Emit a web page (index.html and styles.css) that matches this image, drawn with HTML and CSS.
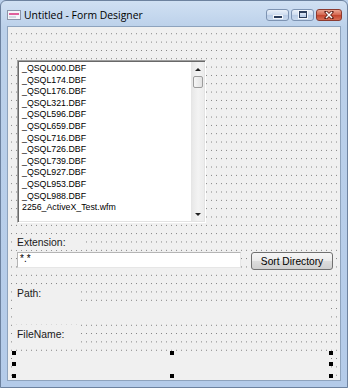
FILE: index.html
```html
<!DOCTYPE html>
<html lang="en">
<head>
    <meta charset="UTF-8">
    <title>Untitled - Form Designer</title>
    <link rel="stylesheet" href="styles.css">
</head>
<body>

    <div class="window">
        <div class="titlebar">
            <svg class="app-icon" width="14" height="10" viewBox="0 0 14 10">
                <rect x="0.5" y="0.5" width="13" height="9" fill="#f4f5f9" stroke="#8a94a8"/>
                <rect x="2" y="3" width="10" height="2" fill="#e0609c"/>
                <line x1="2" y1="7" x2="9" y2="7" stroke="#b4bccb"/>
            </svg>
            <span class="title">Untitled - Form Designer</span>
            <div class="caption-buttons">
                <span class="cap-btn cap-min"><span class="glyph-min"></span></span>
                <span class="cap-btn cap-max"><span class="glyph-max"></span></span>
                <span class="cap-btn cap-close">
                    <svg width="10" height="8" viewBox="0 0 10 8">
                        <path d="M2 1 L8 7 M8 1 L2 7" stroke="#5a1c14" stroke-width="3" stroke-linecap="square"/>
                        <path d="M2 1 L8 7 M8 1 L2 7" stroke="#ffffff" stroke-width="1.5"/>
                    </svg>
                </span>
            </div>
        </div>

        <div class="client">
            <div class="listbox">
                <ul class="items">
                    <li>_QSQL000.DBF</li>
                    <li>_QSQL174.DBF</li>
                    <li>_QSQL176.DBF</li>
                    <li>_QSQL321.DBF</li>
                    <li>_QSQL596.DBF</li>
                    <li>_QSQL659.DBF</li>
                    <li>_QSQL716.DBF</li>
                    <li>_QSQL726.DBF</li>
                    <li>_QSQL739.DBF</li>
                    <li>_QSQL927.DBF</li>
                    <li>_QSQL953.DBF</li>
                    <li>_QSQL988.DBF</li>
                    <li>2256_ActiveX_Test.wfm</li>
                </ul>
                <div class="scrollbar">
                    <div class="sb-arrow"><span class="arrow-up"></span></div>
                    <div class="sb-thumb"></div>
                    <div class="sb-track"></div>
                    <div class="sb-arrow"><span class="arrow-down"></span></div>
                </div>
            </div>

            <div class="label label-ext">Extension:</div>

            <div class="entry-row">
                <div class="entry">*.*</div>
                <button class="btn">Sort Directory</button>
            </div>

            <div class="label label-path">Path:</div>
            <div class="path-box"></div>

            <div class="label label-file">FileName:</div>
            <div class="selected">
                <span class="handle h-tl"></span>
                <span class="handle h-tm"></span>
                <span class="handle h-tr"></span>
                <span class="handle h-ml"></span>
                <span class="handle h-mr"></span>
                <span class="handle h-bl"></span>
                <span class="handle h-bm"></span>
                <span class="handle h-br"></span>
            </div>
        </div>
    </div>

</body>
</html>
```

FILE: styles.css
```css
body {
    margin: 0;
    background: #b9cfeb;
    font-family: "Liberation Sans", Arial, sans-serif;
}

.window {
    width: 348px;
    height: 388px;
    box-sizing: border-box;
    border: 1px solid #6d829f;
    border-radius: 6px 6px 0 0;
    background: linear-gradient(#d0e0f3, #bcd1ea 26px, #b4cbe9);
    display: flex;
    flex-direction: column;
}

.titlebar {
    height: 25px;
    display: flex;
    align-items: center;
    padding-left: 6px;
}

.app-icon {
    margin-top: 2px;
}

.title {
    font-family: "Open Sans", sans-serif;
    font-size: 10.4px;
    color: #000;
    margin-left: 3px;
    margin-top: 3px;
}

.caption-buttons {
    margin-left: auto;
    margin-right: 5px;
    margin-top: 2px;
    display: flex;
    gap: 2px;
}

.cap-btn {
    height: 12px;
    width: 23px;
    box-sizing: border-box;
    border: 1px solid #7d93b2;
    border-radius: 3px;
    background: linear-gradient(#eaf1fa, #cddbee 50%, #b9cce6 51%, #cadaee);
    display: flex;
    align-items: center;
    justify-content: center;
}

.cap-close {
    width: 26px;
    border-color: #8b3a30;
    background: linear-gradient(#eba692, #d4644e 50%, #c2432c 51%, #d87056);
}

.glyph-min {
    width: 8px;
    height: 2px;
    margin-top: 4px;
    background: #2c3e5c;
    box-shadow: 0 0 0 1px #f4f7fb;
}

.glyph-max {
    width: 6px;
    height: 4px;
    border: 1px solid #2c3e5c;
    border-top-width: 2px;
    box-shadow: 0 0 0 1px #f4f7fb;
}

/* form canvas with designer grid */
.client {
    flex: 1;
    margin: 0 6px 6px;
    border: 1px solid #8ea3bd;
    background-color: #7c7c7c;
    background-image:
        linear-gradient(to bottom, transparent 1px, #f0f0f0 1px),
        linear-gradient(to right, transparent 1px, #f0f0f0 1px);
    background-size: 5px 8.33px;
    background-position: 3px 6.3px;
    padding-left: 6px;
    display: flex;
    flex-direction: column;
    align-items: flex-start;
}

.listbox {
    margin: 33px 0 0 3px;
    width: 189px;
    height: 163px;
    box-sizing: border-box;
    border: 1px solid;
    border-color: #a0a0a0 #ffffff #ffffff #a0a0a0;
    box-shadow: inset 1px 1px #696969, inset -1px -1px #e3e3e3;
    background: #fff;
    display: flex;
    overflow: hidden;
}

.items {
    list-style: none;
    margin: 0;
    padding: 2px 0 0 4px;
    flex: 1;
    font-size: 8.8px;
    line-height: 11.6px;
    color: #000;
    white-space: nowrap;
}

.scrollbar {
    width: 12px;
    margin: 1px 1px 1px 0;
    border-left: 1px solid #e6e6e6;
    background: linear-gradient(to right, #e8e8e8, #f3f3f3 50%, #ececec);
    display: flex;
    flex-direction: column;
}

.sb-arrow {
    height: 14px;
    display: flex;
    align-items: center;
    justify-content: center;
}

.arrow-up {
    border-left: 3px solid transparent;
    border-right: 3px solid transparent;
    border-bottom: 3px solid #222;
}

.arrow-down {
    border-left: 3px solid transparent;
    border-right: 3px solid transparent;
    border-top: 3px solid #222;
}

.sb-thumb {
    height: 12px;
    margin: 0 0 0 1px;
    width: 10px;
    box-sizing: border-box;
    border: 1px solid #9c9c9c;
    border-radius: 2px;
    background: linear-gradient(to right, #f6f6f6, #e2e2e2);
}

.sb-track {
    flex: 1;
}

.label {
    background: #f0f0f0;
    font-size: 10.4px;
    color: #1a1a1a;
    padding-left: 3px;
    box-sizing: border-box;
    display: flex;
    align-items: center;
}

.label-ext {
    margin-top: 11px;
    width: 70px;
    height: 16px;
}

.entry-row {
    margin: 2px 0 0 3px;
    display: flex;
    align-items: flex-start;
}

.entry {
    width: 224px;
    height: 16px;
    box-sizing: border-box;
    border: 1px solid;
    border-color: #b5b5b5 #e6e6e6 #e6e6e6 #b5b5b5;
    background: #fff;
    font-size: 10px;
    line-height: 12px;
    padding-left: 2px;
}

.btn {
    margin-left: 10px;
    width: 82px;
    height: 18px;
    padding: 0;
    border: 1px solid #707070;
    border-radius: 3px;
    background: linear-gradient(#f6f6f6, #ebebeb 50%, #dddddd 50%, #cfcfcf);
    font-family: "Liberation Sans", Arial, sans-serif;
    font-size: 10.2px;
    color: #000;
}

.label-path {
    margin-top: 15px;
    width: 66px;
    height: 17px;
}

.path-box {
    width: 314px;
    height: 17px;
    background: #f0f0f0;
}

.label-file {
    margin-top: 6px;
    width: 67px;
    height: 19px;
}

.selected {
    position: relative;
    margin-top: 9px;
    width: 317px;
    height: 23px;
    background: #f0f0f0;
}

.handle {
    position: absolute;
    width: 4px;
    height: 4px;
    background: #000;
}

.h-tl { left: -2px; top: -2px; }
.h-tm { left: 156px; top: -2px; }
.h-tr { right: -2px; top: -2px; }
.h-ml { left: -2px; top: 9px; }
.h-mr { right: -2px; top: 9px; }
.h-bl { left: -2px; bottom: -2px; }
.h-bm { left: 156px; bottom: -2px; }
.h-br { right: -2px; bottom: -2px; }
```
